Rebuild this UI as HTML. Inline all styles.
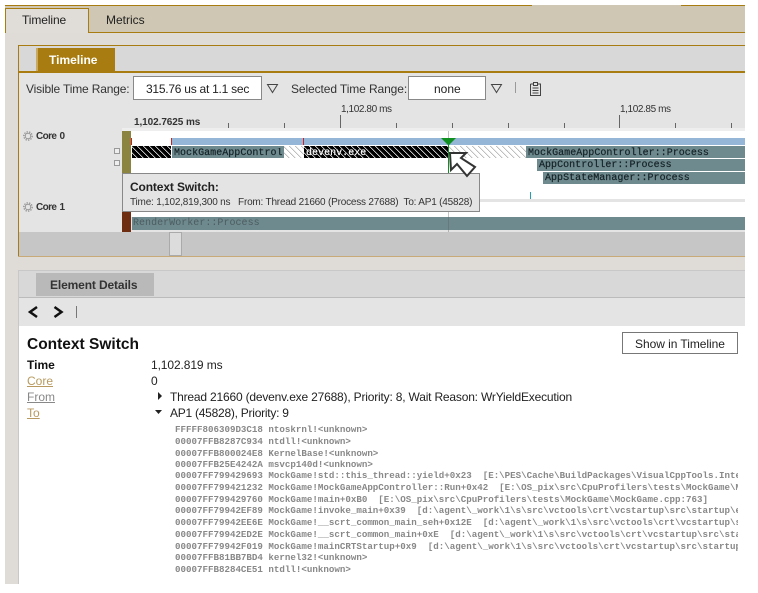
<!DOCTYPE html>
<html><head><meta charset="utf-8"><style>
html,body{margin:0;padding:0;background:#fff}
body{width:758px;height:593px;overflow:hidden;position:relative;font-family:"Liberation Sans",sans-serif;color:#222}
.a{position:absolute}
.t{position:absolute;white-space:nowrap;line-height:14px;font-size:12px}
.m{position:absolute;white-space:nowrap;font-family:"Liberation Mono",monospace;font-size:10px;letter-spacing:.03px;line-height:12px;color:#142226;-webkit-text-stroke:.2px #142226}
.blk{background:repeating-linear-gradient(45deg,#000 0,#000 3.4px,#fff 3.4px,#fff 4.24px)}
.lgt{background:repeating-linear-gradient(45deg,#fff 0,#fff 3.4px,#aaa 3.4px,#aaa 4.24px)}
.tl{position:absolute;background:#6e8a8e}
.tk{position:absolute;width:1px;background:#666;top:123px;height:5px}
.s{position:absolute;left:175px;white-space:pre;font-family:"Liberation Mono",monospace;font-weight:bold;font-size:9.17px;line-height:12px;color:#888}
</style></head><body>
<div class="a" style="left:5px;top:5px;width:740px;height:1px;background:#a87c10"></div>
<div class="a" style="left:532px;top:5px;width:149px;height:1px;background:#cfc7b3"></div>
<div class="a" style="left:5px;top:6px;width:740px;height:26px;background:#cfc7b3"></div>
<div class="a" style="left:5px;top:32px;width:740px;height:1px;background:#a87c10"></div>
<div class="a" style="left:5px;top:33px;width:740px;height:551px;background:#dfdcd8"></div>
<div class="a" style="left:5px;top:8px;width:84px;height:25px;background:#e0ddd8;border-top:1px solid #a87c10;border-right:1px solid #a87c10;border-left:1px solid #a87c10;box-sizing:border-box"></div>
<div class="t" style="left:22px;top:13px;letter-spacing:-.1px">Timeline</div>
<div class="t" style="left:106px;top:13px">Metrics</div>

<div class="a" style="left:18px;top:45px;width:727px;height:212px;background:#e4e4e4;border-left:1px solid #a87c10;box-sizing:border-box"></div>
<div class="a" style="left:18px;top:45px;width:727px;height:1px;background:#a87c10"></div>
<div class="a" style="left:19px;top:46px;width:726px;height:25px;background:#d8d8d8"></div>
<div class="a" style="left:19px;top:71px;width:726px;height:2px;background:#a87c10"></div>
<div class="a" style="left:36px;top:48px;width:79px;height:23px;background:#a87c10;border-left:2px solid #c8aa60;box-sizing:border-box"></div>
<div class="t" style="left:49px;top:53px;color:#fff;font-weight:bold">Timeline</div>

<div class="t" style="left:26px;top:82px;color:#333;letter-spacing:-.16px">Visible Time Range:</div>
<div class="a" style="left:133px;top:76px;width:129px;height:24px;background:#fff;border:1px solid #888;box-sizing:border-box"></div>
<div class="t" style="left:146px;top:82px;letter-spacing:-.25px">315.76 us at 1.1 sec</div>
<svg class="a" style="left:266px;top:83px" width="14" height="11"><path d="M1.500 1.500H11.500L6.500 9.500Z" fill="none" stroke="#444" stroke-width="1"/></svg>
<div class="t" style="left:291px;top:82px;color:#333;letter-spacing:-.1px">Selected Time Range:</div>
<div class="a" style="left:408px;top:76px;width:78px;height:24px;background:#fff;border:1px solid #888;box-sizing:border-box"></div>
<div class="t" style="left:434px;top:82px">none</div>
<svg class="a" style="left:490px;top:83px" width="14" height="11"><path d="M1.500 1.500H11.500L6.500 9.500Z" fill="none" stroke="#444" stroke-width="1"/></svg>
<div class="a" style="left:515px;top:82px;width:1px;height:11px;background:#999"></div>
<svg class="a" style="left:529px;top:81px" width="14" height="16"><path d="M1.500 3H4.500M8.500 3H11.500V14.500H1.500V3M4.500 1.500H8.500V4.500H4.500ZM3.500 7H9.500M3.500 9.500H9.500M3.500 12H9.500" fill="none" stroke="#444" stroke-width="1"/></svg>

<div class="t" style="left:341px;top:103px;font-size:10px;color:#333;letter-spacing:-.4px">1,102.80 ms</div>
<div class="t" style="left:620px;top:103px;font-size:10px;color:#333;letter-spacing:-.4px">1,102.85 ms</div>
<div class="t" style="left:134px;top:116px;font-size:10px;font-weight:bold;color:#333;letter-spacing:-.08px">1,102.7625 ms</div>
<div class="tk" style="left:228px"></div><div class="tk" style="left:284px"></div>
<div class="tk" style="left:340px;top:115px;height:13px"></div>
<div class="tk" style="left:396px"></div><div class="tk" style="left:452px"></div><div class="tk" style="left:508px"></div><div class="tk" style="left:564px"></div>
<div class="tk" style="left:619px;top:115px;height:13px"></div>
<div class="tk" style="left:675px"></div><div class="tk" style="left:731px"></div>

<!-- tracks -->
<div class="a" style="left:122px;top:128px;width:623px;height:3px;background:#eee"></div>
<div class="a" style="left:131px;top:131px;width:614px;height:70px;background:#fff"></div>
<div class="a" style="left:131px;top:199px;width:614px;height:3px;background:#e4e4e4"></div>
<div class="a" style="left:131px;top:202px;width:614px;height:15px;background:#fff"></div>
<div class="a" style="left:122px;top:131px;width:9px;height:43px;background:#8a8440"></div>
<div class="a" style="left:122px;top:212px;width:9px;height:20px;background:#6e2c10"></div>
<div class="a" style="left:171px;top:138px;width:574px;height:7px;background:#96b6d8"></div>
<div class="a" style="left:131px;top:138px;width:1px;height:7px;background:#d02020"></div>
<div class="a" style="left:171px;top:138px;width:1px;height:7px;background:#d02020"></div>
<div class="a" style="left:303px;top:138px;width:1px;height:7px;background:#d02020"></div>
<div class="a blk" style="left:132px;top:146px;width:39px;height:12px"></div>
<div class="tl" style="left:172px;top:146px;width:112px;height:12px"></div>
<div class="m" style="left:174px;top:148px;width:109px;overflow:hidden">MockGameAppControl</div>
<div class="a lgt" style="left:284px;top:146px;width:20px;height:12px"></div>
<div class="a blk" style="left:304px;top:146px;width:144px;height:12px"></div>
<div class="m" style="left:306px;top:148px;color:#fff;-webkit-text-stroke:.2px #fff;text-shadow:0 0 1px #000,0 0 1px #000">devenv.exe</div>
<div class="a lgt" style="left:449px;top:146px;width:77px;height:12px"></div>
<div class="tl" style="left:526px;top:146px;width:219px;height:12px"></div>
<div class="m" style="left:528px;top:148px">MockGameAppController::Process</div>
<div class="tl" style="left:537px;top:159px;width:208px;height:12px"></div>
<div class="m" style="left:539px;top:160px">AppController::Process</div>
<div class="tl" style="left:543px;top:172px;width:202px;height:12px"></div>
<div class="m" style="left:545px;top:173px">AppStateManager::Process</div>
<div class="a" style="left:530px;top:192px;width:1px;height:7px;background:#20a0b0"></div>
<div class="tl" style="left:132px;top:217px;width:613px;height:13px"></div>
<div class="m" style="left:133px;top:218px;color:#4c5c60;-webkit-text-stroke:0">RenderWorker::Process</div>
<div class="a" style="left:448px;top:131px;width:1px;height:101px;background:rgba(90,90,90,.35)"></div>

<div class="a" style="left:114px;top:148px;border:1px solid #999;background:#eee;width:4px;height:4px"></div>
<div class="a" style="left:114px;top:160px;border:1px solid #999;background:#eee;width:4px;height:4px"></div>

<svg class="a" style="left:23px;top:131px" width="10" height="10"><circle cx="5" cy="5" r="2.800" fill="none" stroke="#888" stroke-width=".8"/><circle cx="5" cy="5" r="4.200" fill="none" stroke="#888" stroke-width="1.200" stroke-dasharray="1.300 1.300"/></svg>
<svg class="a" style="left:23px;top:202px" width="10" height="10"><circle cx="5" cy="5" r="2.800" fill="none" stroke="#888" stroke-width=".8"/><circle cx="5" cy="5" r="4.200" fill="none" stroke="#888" stroke-width="1.200" stroke-dasharray="1.300 1.300"/></svg>
<div class="t" style="left:36px;top:130px;font-size:10px;font-weight:bold;color:#333;letter-spacing:-.6px;word-spacing:1px">Core 0</div>
<div class="t" style="left:36px;top:201px;font-size:10px;font-weight:bold;color:#333;letter-spacing:-.6px;word-spacing:1px">Core 1</div>

<!-- scrollbar -->
<div class="a" style="left:19px;top:232px;width:726px;height:24px;background:#c6c6c6"></div>
<div class="a" style="left:169px;top:232px;width:13px;height:24px;background:#dcdcdc;border:1px solid #aaa;box-sizing:border-box"></div>
<div class="a" style="left:18px;top:256px;width:727px;height:1px;background:#c8aa78"></div>

<!-- tooltip -->
<div class="a" style="left:122px;top:173px;width:358px;height:39px;background:#e4e4e4;border:1px solid #888;box-sizing:border-box"></div>
<div class="t" style="left:130px;top:180px;font-weight:bold;color:#222;letter-spacing:-.13px">Context Switch:</div>
<div class="t" style="left:130px;top:196px;font-size:10px;color:#333;letter-spacing:-.2px">Time: 1,102,819,300 ns &nbsp; From: Thread 21660 (Process 27688) &nbsp;To: AP1 (45828)</div>

<!-- marker + cursor -->
<div class="a" style="left:448px;top:145px;width:1px;height:28px;background:#109020"></div>
<svg class="a" style="left:440px;top:137px" width="38" height="41"><path d="M1 1H16L8.500 8.500Z" fill="#109020"/><path d="M10 16H26L21 21L35 30L27 39L17 27L11 33Z" fill="#fff" stroke="#333" stroke-width="2" stroke-linejoin="miter"/></svg>

<!-- Element details -->
<div class="a" style="left:18px;top:270px;width:727px;height:314px;background:#fff;border-left:1px solid #c8c8c8;border-top:1px solid #c8c8c8;box-sizing:border-box"></div>
<div class="a" style="left:19px;top:271px;width:726px;height:26px;background:#d8d8d8"></div>
<div class="a" style="left:19px;top:297px;width:726px;height:29px;background:#e4e4e4;border-top:1px solid #bbb;box-sizing:border-box"></div>
<div class="a" style="left:36px;top:273px;width:118px;height:23px;background:#b9b9b9"></div>
<div class="t" style="left:50px;top:278px;font-weight:bold;color:#333;letter-spacing:-.13px">Element Details</div>
<svg class="a" style="left:28px;top:304px" width="50" height="16"><path d="M9 3L2 8L9 13M26.500 3L33.500 8L26.500 13" fill="none" stroke="#111" stroke-width="2.500"/><path d="M48.500 2V14" stroke="#777" stroke-width="1"/></svg>

<div class="t" style="left:27px;top:337px;font-size:15.500px;font-weight:bold;line-height:16px;color:#111">Context Switch</div>
<div class="a" style="left:622px;top:332px;width:116px;height:22px;background:#fff;border:1px solid #777;box-sizing:border-box"></div>
<div class="t" style="left:635px;top:337px;color:#222;letter-spacing:-.05px">Show in Timeline</div>

<div class="t" style="left:27px;top:358px;font-weight:bold;color:#111">Time</div>
<div class="t" style="left:27px;top:374px;color:#b89a60;text-decoration:underline">Core</div>
<div class="t" style="left:27px;top:390px;color:#888;text-decoration:underline">From</div>
<div class="t" style="left:27px;top:406px;color:#b89a60;text-decoration:underline">To</div>
<div class="t" style="left:151px;top:358px;letter-spacing:-.1px">1,102.819 ms</div>
<div class="t" style="left:151px;top:374px">0</div>
<svg class="a" style="left:157px;top:391px" width="6" height="10"><path d="M1 1L5 5L1 9Z" fill="#222"/></svg>
<div class="t" style="left:170px;top:390px;letter-spacing:-.19px">Thread 21660 (devenv.exe 27688), Priority: 8, Wait Reason: WrYieldExecution</div>
<svg class="a" style="left:154px;top:409px" width="9" height="6"><path d="M1 1H8L4.500 5Z" fill="#222"/></svg>
<div class="t" style="left:170px;top:406px;letter-spacing:-.25px">AP1 (45828), Priority: 9</div>

<div class="a" style="left:0;top:420px;width:738px;height:160px;overflow:hidden">
<div class="s" style="top:4px">FFFFF806309D3C18 ntoskrnl!&lt;unknown&gt;</div>
<div class="s" style="top:16px">00007FFB8287C934 ntdll!&lt;unknown&gt;</div>
<div class="s" style="top:28px">00007FFB800024E8 KernelBase!&lt;unknown&gt;</div>
<div class="s" style="top:39px">00007FFB25E4242A msvcp140d!&lt;unknown&gt;</div>
<div class="s" style="top:50px">00007FF799429693 MockGame!std::this_thread::yield+0x23  [E:\PES\Cache\BuildPackages\VisualCppTools.Internal</div>
<div class="s" style="top:62px">00007FF799421232 MockGame!MockGameAppController::Run+0x42  [E:\OS_pix\src\CpuProfilers\tests\MockGame\MockGame.cpp</div>
<div class="s" style="top:74px">00007FF799429760 MockGame!main+0xB0  [E:\OS_pix\src\CpuProfilers\tests\MockGame\MockGame.cpp:763]</div>
<div class="s" style="top:85px">00007FF79942EF89 MockGame!invoke_main+0x39  [d:\agent\_work\1\s\src\vctools\crt\vcstartup\src\startup\exe_common</div>
<div class="s" style="top:97px">00007FF79942EE6E MockGame!__scrt_common_main_seh+0x12E  [d:\agent\_work\1\s\src\vctools\crt\vcstartup\src\startup</div>
<div class="s" style="top:109px">00007FF79942ED2E MockGame!__scrt_common_main+0xE  [d:\agent\_work\1\s\src\vctools\crt\vcstartup\src\startup\exe</div>
<div class="s" style="top:121px">00007FF79942F019 MockGame!mainCRTStartup+0x9  [d:\agent\_work\1\s\src\vctools\crt\vcstartup\src\startup\exe_main</div>
<div class="s" style="top:132px">00007FFB81BB7BD4 kernel32!&lt;unknown&gt;</div>
<div class="s" style="top:144px">00007FFB8284CE51 ntdll!&lt;unknown&gt;</div>
</div>
</body></html>
